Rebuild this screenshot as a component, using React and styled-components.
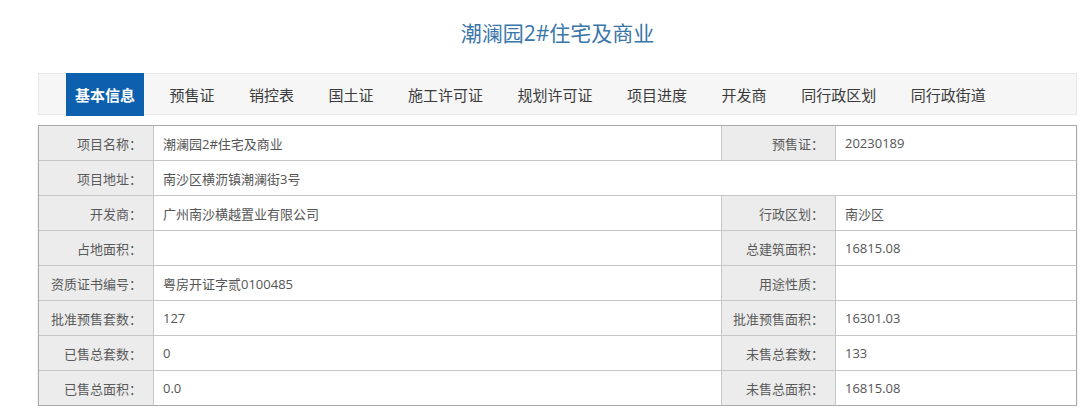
import React from "react";
import styled, { createGlobalStyle } from "styled-components";

const Global = createGlobalStyle`
  html, body { margin: 0; padding: 0; background: #fff; }
  body { font-family: "Open Sans", "Noto Sans CJK SC", sans-serif; }
`;

const Page = styled.div`
  width: 1039px;
  margin-left: 38px;
`;

const Title = styled.h1`
  margin: 0;
  height: 66px;
  line-height: 66px;
  text-align: center;
  font-size: 21px;
  font-weight: 400;
  color: #3a76aa;
  font-family: "Open Sans", "Noto Sans CJK SC", sans-serif;
  margin-bottom: 7px;
`;

const TabBar = styled.nav`
  height: 40px;
  border: 1px solid #e8e8e8;
  background: #f6f6f6;
  display: flex;
  align-items: stretch;
  padding-left: 27px;
  gap: 14.5px;
`;

const Tab = styled.div`
  display: flex;
  align-items: center;
  justify-content: center;
  padding: 0 ${(p) => (p.$active ? 9 : 10)}px;
  font-size: 15px;
  font-family: "Noto Sans CJK SC", sans-serif;
  color: ${(p) => (p.$active ? "#fff" : "#3a3a3a")};
  font-weight: ${(p) => (p.$active ? 700 : 400)};
  background: ${(p) => (p.$active ? "#0d60ae" : "transparent")};
  margin-top: ${(p) => (p.$active ? -1 : 0)}px;
  margin-bottom: ${(p) => (p.$active ? -2 : 0)}px;
  margin-right: ${(p) => (p.$active ? 1 : 0)}px;
`;

const Table = styled.div`
  margin-top: 10px;
  display: grid;
  grid-template-columns: 115px 568px 114px 1fr;
  border-top: 1px solid #a9a9a9;
  border-left: 1px solid #a9a9a9;
  box-shadow: 0 1px 2px rgba(0, 0, 0, 0.15);
`;

const Cell = styled.div`
  height: 34px;
  display: flex;
  align-items: center;
  font-size: 13px;
  color: #555;
  border-bottom: 1px solid ${(p) => (p.$last ? "#a9a9a9" : "#c6c6c6")};
  border-right: 1px solid ${(p) => (p.$edge ? "#a9a9a9" : "#c6c6c6")};
  grid-column: span ${(p) => p.$span || 1};
`;

const Label = styled(Cell)`
  justify-content: flex-end;
  padding-right: 11px;
  background: #ececec;
  color: #5a5a5a;
`;

const Value = styled(Cell)`
  padding-left: 9px;
  background: #fff;
`;

const tabs = [
  "基本信息",
  "预售证",
  "销控表",
  "国土证",
  "施工许可证",
  "规划许可证",
  "项目进度",
  "开发商",
  "同行政区划",
  "同行政街道",
];

const rows = [
  ["项目名称：", "潮澜园2#住宅及商业", "预售证：", "20230189"],
  ["项目地址：", "南沙区横沥镇潮澜街3号"],
  ["开发商：", "广州南沙横越置业有限公司", "行政区划：", "南沙区"],
  ["占地面积：", "", "总建筑面积：", "16815.08"],
  ["资质证书编号：", "粤房开证字贰0100485", "用途性质：", ""],
  ["批准预售套数：", "127", "批准预售面积：", "16301.03"],
  ["已售总套数：", "0", "未售总套数：", "133"],
  ["已售总面积：", "0.0", "未售总面积：", "16815.08"],
];

export default function App() {
  return (
    <Page>
      <Global />
      <Title>潮澜园2#住宅及商业</Title>
      <TabBar>
        {tabs.map((t, i) => (
          <Tab key={t} $active={i === 0}>
            {t}
          </Tab>
        ))}
      </TabBar>
      <Table>
        {rows.map((r, i) => {
          const last = i === rows.length - 1;
          if (r.length === 2) {
            return (
              <React.Fragment key={i}>
                <Label $last={last}>{r[0]}</Label>
                <Value $last={last} $span={3} $edge>
                  {r[1]}
                </Value>
              </React.Fragment>
            );
          }
          return (
            <React.Fragment key={i}>
              <Label $last={last}>{r[0]}</Label>
              <Value $last={last}>{r[1]}</Value>
              <Label $last={last}>{r[2]}</Label>
              <Value $last={last} $edge>
                {r[3]}
              </Value>
            </React.Fragment>
          );
        })}
      </Table>
    </Page>
  );
}
